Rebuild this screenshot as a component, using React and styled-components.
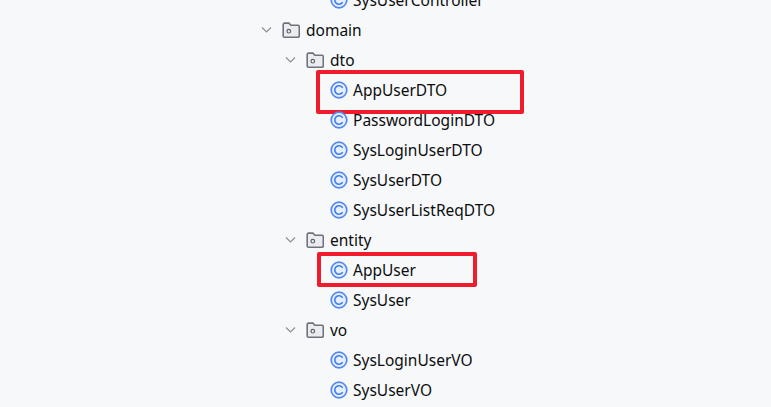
import React from "react";
import styled, { createGlobalStyle } from "styled-components";

const GlobalStyle = createGlobalStyle`
  html, body {
    margin: 0;
    height: 100%;
    background: #f7f8fa;
    overflow: hidden;
  }
`;

const ROWS = [
  { depth: 2, type: "class", label: "SysUserController" },
  { depth: 0, type: "folder", label: "domain" },
  { depth: 1, type: "folder", label: "dto" },
  { depth: 2, type: "class", label: "AppUserDTO", mark: "dto" },
  { depth: 2, type: "class", label: "PasswordLoginDTO" },
  { depth: 2, type: "class", label: "SysLoginUserDTO" },
  { depth: 2, type: "class", label: "SysUserDTO" },
  { depth: 2, type: "class", label: "SysUserListReqDTO" },
  { depth: 1, type: "folder", label: "entity" },
  { depth: 2, type: "class", label: "AppUser", mark: "entity" },
  { depth: 2, type: "class", label: "SysUser" },
  { depth: 1, type: "folder", label: "vo" },
  { depth: 2, type: "class", label: "SysLoginUserVO" },
  { depth: 2, type: "class", label: "SysUserVO" },
];

const Chevron = () => (
  <ChevronBox viewBox="0 0 16 16" fill="none">
    <path d="M4 5.5 L8.5 10 L13 5.5" stroke="#8c8f98" strokeWidth="1.2" />
  </ChevronBox>
);

const FolderIcon = () => (
  <IconBox viewBox="0 0 18 18" fill="none">
    <path
      d="M1.2 3.4 a1.3 1.3 0 0 1 1.3 -1.3 h4.4 l2 2.2 h6.9 a1.5 1.5 0 0 1 1.5 1.5 v9 a1.5 1.5 0 0 1 -1.5 1.5 h-13.3 a1.3 1.3 0 0 1 -1.3 -1.3 z"
      fill="#ebecf0"
      stroke="#6f727c"
      strokeWidth="1.6"
    />
    <circle cx="6.8" cy="10.2" r="1.8" stroke="#5f626c" strokeWidth="1.2" />
  </IconBox>
);

const ClassIcon = () => (
  <IconBox viewBox="0 0 18 18" fill="none">
    <circle cx="9" cy="9" r="7.8" fill="#e7effd" stroke="#4f88f7" strokeWidth="1.7" />
    <path
      d="M12.2 6.3 a4.2 4.2 0 1 0 0 5.4"
      stroke="#3f7cf5"
      strokeWidth="1.6"
      strokeLinecap="round"
    />
  </IconBox>
);

const App = () => (
  <Tree>
    <GlobalStyle />
    {ROWS.map((row) => (
      <Row key={row.label} $depth={row.depth}>
        {row.type === "folder" ? <Chevron /> : <ChevronGap />}
        {row.type === "folder" ? <FolderIcon /> : <ClassIcon />}
        <Label $folder={row.type === "folder"}>{row.label}</Label>
        {row.mark && <Highlight $mark={row.mark} />}
      </Row>
    ))}
  </Tree>
);

const Tree = styled.div`
  margin-top: -15px;
  padding-left: 258px;
  font-family: "Noto Sans", "Liberation Sans", sans-serif;
  font-size: 15.5px;
  color: #0c0d0f;
`;

const Row = styled.div`
  position: relative;
  display: flex;
  align-items: center;
  height: 30px;
  padding-left: ${(p) => p.$depth * 24}px;
`;

const ChevronBox = styled.svg`
  flex: none;
  width: 16px;
  height: 16px;
  margin-right: 8px;
`;

const ChevronGap = styled.div`
  flex: none;
  width: 24px;
`;

const IconBox = styled.svg`
  flex: none;
  width: 18px;
  height: 18px;
`;

const Label = styled.span`
  margin-left: ${(p) => (p.$folder ? 6 : 5)}px;
  white-space: nowrap;
  line-height: 30px;
`;

// red annotation boxes drawn over the tree
const Highlight = styled.div`
  position: absolute;
  box-sizing: border-box;
  border: 4px solid #f01c2c;
  border-radius: 2px;
  left: ${(p) => (p.$mark === "dto" ? 58 : 59)}px;
  top: ${(p) => (p.$mark === "dto" ? -5 : -3)}px;
  width: ${(p) => (p.$mark === "dto" ? 208 : 160)}px;
  height: ${(p) => (p.$mark === "dto" ? 44 : 35)}px;
`;

export default App;
